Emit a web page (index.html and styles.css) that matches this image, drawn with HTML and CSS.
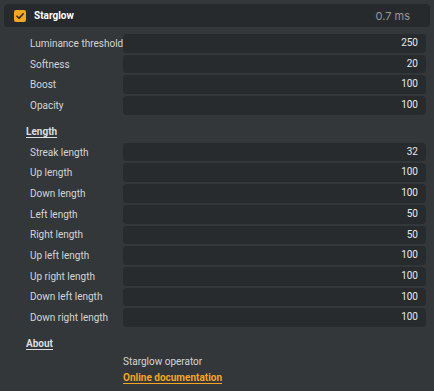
FILE: index.html
```html
<!DOCTYPE html>
<html>
<head>
<meta charset="utf-8">
<link rel="stylesheet" href="styles.css">
</head>
<body>
<div class="panel">
  <div class="header">
    <span class="check">
      <svg width="12" height="12" viewBox="0 0 12 12"><path d="M3 6.2 L5.1 8.3 L9.2 3.8" fill="none" stroke="#2a2a2a" stroke-width="1.6" stroke-linecap="round" stroke-linejoin="round"/></svg>
    </span>
    <span class="title">Starglow</span>
    <span class="time">0.7 ms</span>
  </div>

  <div class="group first">
    <div class="row"><span class="label">Luminance threshold</span><span class="field">250</span></div>
    <div class="row"><span class="label">Softness</span><span class="field">20</span></div>
    <div class="row"><span class="label">Boost</span><span class="field">100</span></div>
    <div class="row"><span class="label">Opacity</span><span class="field">100</span></div>
  </div>

  <div class="section">Length</div>
  <div class="group">
    <div class="row"><span class="label">Streak length</span><span class="field">32</span></div>
    <div class="row"><span class="label">Up length</span><span class="field">100</span></div>
    <div class="row"><span class="label">Down length</span><span class="field">100</span></div>
    <div class="row"><span class="label">Left length</span><span class="field">50</span></div>
    <div class="row"><span class="label">Right length</span><span class="field">50</span></div>
    <div class="row"><span class="label">Up left length</span><span class="field">100</span></div>
    <div class="row"><span class="label">Up right length</span><span class="field">100</span></div>
    <div class="row"><span class="label">Down left length</span><span class="field">100</span></div>
    <div class="row"><span class="label">Down right length</span><span class="field">100</span></div>
  </div>

  <div class="section about">About</div>
  <div class="info">
    <div class="desc">Starglow operator</div>
    <a class="doc" href="#">Online documentation</a>
  </div>
</div>
</body>
</html>
```

FILE: styles.css
```css
html, body {
  margin: 0;
  padding: 0;
  background: #33373a;
}
body {
  font-family: Roboto, "Noto Sans", sans-serif;
  font-size: 10px;
  color: #d3d5d6;
  width: 434px;
  height: 391px;
  overflow: hidden;
}
.panel {
  padding: 4px 4px 0 4px;
}
.header {
  display: flex;
  align-items: center;
  height: 23px;
  background: #262a2c;
  border-radius: 4px;
  padding: 0 20px 0 10px;
}
.check {
  width: 12px;
  height: 12px;
  background: #f5a623;
  border-radius: 2px;
  display: flex;
}
.title {
  margin-left: 8px;
  font-weight: 700;
  color: #ffffff;
  font-size: 10px;
}
.time {
  margin-left: auto;
  color: #95999b;
  font-family: Inter, sans-serif;
  font-size: 11px;
}
.group {
  display: flex;
  flex-direction: column;
  gap: 2px;
  padding-left: 26px;
  padding-right: 4px;
}
.group.first {
  margin-top: 7px;
}
.row {
  display: flex;
  align-items: center;
  height: 18.7px;
}
.label {
  width: 93px;
  flex: none;
  white-space: nowrap;
}
.field {
  flex: 1;
  height: 18.7px;
  line-height: 18.7px;
  background: #272b2d;
  border-radius: 4px;
  text-align: right;
  padding-right: 8px;
  color: #e8e9ea;
}
.section {
  margin: 10px 0 0 22px;
  height: 18px;
  line-height: 14px;
  font-weight: 700;
  text-decoration: underline;
  text-underline-offset: 2px;
  color: #dcdede;
}
.section.about {
  margin-top: 10px;
  height: 17px;
}
.info {
  padding-left: 119px;
}
.desc {
  height: 15px;
  line-height: 16px;
}
.doc {
  display: inline-block;
  color: #f5a623;
  font-weight: 700;
  text-decoration: underline;
  text-underline-offset: 2px;
  line-height: 18px;
}
```
